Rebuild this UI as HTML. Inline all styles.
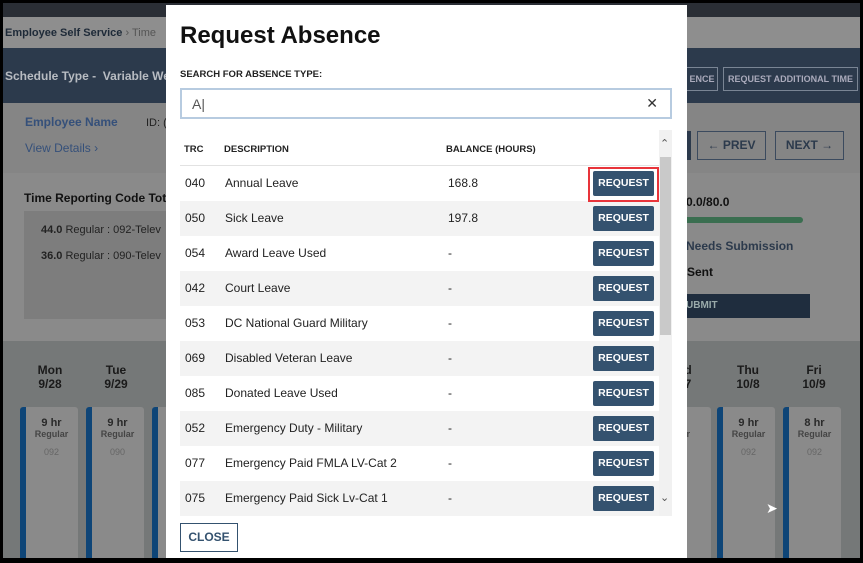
<!DOCTYPE html>
<html><head><style>
*{margin:0;padding:0;box-sizing:border-box}
body{width:863px;height:563px;overflow:hidden;position:relative;font-family:"Liberation Sans",sans-serif;background:#000}
.a{position:absolute}
.fr{left:3px;top:3px;width:857px;height:555px;background:#858585;overflow:hidden}
.card{position:absolute;top:404px;width:58px;height:160px;background:#8a8a8a;border-radius:3px;text-align:center;font-weight:bold;color:#2a2a2a}
.card:before{content:"";position:absolute;left:0;top:0;width:6px;height:100%;background:#0e4577;border-radius:3px 0 0 3px}
.card .h{font-size:11px;margin-top:10px;padding-left:5px}
.card .r{font-size:9px;color:#444;padding-left:5px}
.card .c{font-size:9px;color:#666;font-weight:normal;margin-top:8px;padding-left:5px}
.day{position:absolute;top:360px;width:58px;text-align:center;font-weight:bold;font-size:12px;color:#1a1a1a;line-height:14px}
.modal{left:166px;top:5px;width:521px;height:553px;background:#fff}
.row{position:absolute;left:14px;width:479px;height:35px;font-size:12px;color:#222}
.row span{position:absolute;top:10px}
.row.g{background:#f3f3f3}
.btn{position:absolute;left:413px;top:5px;width:61px;height:25px;background:#34526f;color:#fff;font-size:10.5px;font-weight:bold;text-align:center;line-height:25px;border-radius:2px}
</style></head><body>
<div class="a fr">
 <div class="a" style="left:0;top:0;width:857px;height:14px;background:#2a2e35"></div>
 <div class="a" style="left:0;top:14px;width:857px;height:31px;background:#8e8e8e"></div>
 <div class="a" style="left:2px;top:24px;font-size:11px;font-weight:bold;color:#1e2a38">Employee Self Service <span style="font-weight:normal;color:#555">› Time</span></div>
 <div class="a" style="left:0;top:45px;width:857px;height:55px;background:#2c3a4c"></div>
 <div class="a" style="left:2px;top:66px;font-size:12px;font-weight:bold;color:#b8bcc2">Schedule Type - &nbsp;Variable We</div>
 <div class="a" style="left:683px;top:64px;width:32px;height:24px;border:1px solid #7a8594;font-size:9px;color:#aab;font-weight:bold;line-height:22px">&nbsp;ENCE</div>
 <div class="a" style="left:720px;top:64px;width:135px;height:24px;border:1px solid #7a8594;font-size:9px;color:#aab;font-weight:bold;line-height:22px;text-align:center">REQUEST ADDITIONAL TIME</div>
 <div class="a" style="left:22px;top:112px;font-size:12px;font-weight:bold;color:#35507a">Employee Name</div>
 <div class="a" style="left:143px;top:114px;font-size:11px;color:#222">ID: (</div>
 <div class="a" style="left:22px;top:138px;font-size:12px;color:#35507a">View Details ›</div>
 <div class="a" style="left:0;top:170px;width:857px;height:168px;background:#8a8a8a"></div>
 <div class="a" style="left:21px;top:188px;font-size:12px;font-weight:bold;color:#111">Time Reporting Code Tota</div>
 <div class="a" style="left:21px;top:208px;width:150px;height:108px;background:#7d7d7d"></div>
 <div class="a" style="left:38px;top:221px;font-size:11px;color:#222"><b>44.0</b> Regular : 092-Telev</div>
 <div class="a" style="left:38px;top:247px;font-size:11px;color:#222"><b>36.0</b> Regular : 090-Telev</div>
 <div class="a" style="left:681px;top:128px;width:7px;height:29px;background:#2c3a4c"></div>
 <div class="a" style="left:694px;top:128px;width:69px;height:29px;border:1px solid #3b4a5e;font-size:12px;font-weight:bold;color:#2c3a4c;text-align:center;line-height:27px">← PREV</div>
 <div class="a" style="left:772px;top:128px;width:69px;height:29px;border:1px solid #3b4a5e;font-size:12px;font-weight:bold;color:#2c3a4c;text-align:center;line-height:27px">NEXT →</div>
 <div class="a" style="left:683px;top:192px;font-size:12px;font-weight:bold;color:#111">0.0/80.0</div>
 <div class="a" style="left:680px;top:214px;width:120px;height:6px;background:#3a6e50;border-radius:3px"></div>
 <div class="a" style="left:683px;top:236px;font-size:12px;font-weight:bold;color:#2c3a4c">Needs Submission</div>
 <div class="a" style="left:684px;top:262px;font-size:12px;font-weight:bold;color:#111">Sent</div>
 <div class="a" style="left:680px;top:291px;width:127px;height:24px;background:#1f2d3e;font-size:10px;font-weight:bold;color:#9aa;line-height:24px;padding-left:3px">UBMIT</div>
 <div class="a" style="left:0;top:338px;width:857px;height:220px;background:#757878"></div>
 <div class="day" style="left:18px">Mon<br>9/28</div><div class="day" style="left:84px">Tue<br>9/29</div>
 <div class="day" style="left:656px">d<br>7</div>
 <div class="day" style="left:716px">Thu<br>10/8</div><div class="day" style="left:782px">Fri<br>10/9</div>
 <div class="card" style="left:17px"><div class="h">9 hr</div><div class="r">Regular</div><div class="c">092</div></div>
 <div class="card" style="left:83px"><div class="h">9 hr</div><div class="r">Regular</div><div class="c">090</div></div>
 <div class="card" style="left:149px"></div>
 <div class="card" style="left:650px"><div class="h">r</div><div class="r">lar</div></div>
 <div class="card" style="left:714px"><div class="h">9 hr</div><div class="r">Regular</div><div class="c">092</div></div>
 <div class="card" style="left:780px"><div class="h">8 hr</div><div class="r">Regular</div><div class="c">092</div></div>
 <div class="a" style="left:763px;top:497px;font-size:14px;color:#fff">➤</div>
</div>
<div class="a modal">
 <div class="a" style="left:14px;top:17px;font-size:24px;font-weight:bold;color:#111">Request Absence</div>
 <div class="a" style="left:14px;top:64px;font-size:9.5px;font-weight:bold;color:#222">SEARCH FOR ABSENCE TYPE:</div>
 <div class="a" style="left:14px;top:83px;width:492px;height:31px;border:2px solid #b7cbe0;font-size:14px;color:#555;padding:6px 0 0 10px">A|<span style="position:absolute;right:12px;top:5px;color:#333">✕</span></div>
 <div class="a" style="left:14px;top:125px;width:479px;height:36px;border-bottom:1px solid #e2e2e2;font-size:9.5px;font-weight:bold;color:#222">
  <span class="a" style="left:4px;top:14px">TRC</span><span class="a" style="left:44px;top:14px">DESCRIPTION</span><span class="a" style="left:266px;top:14px">BALANCE (HOURS)</span></div>
 <div class="a" style="left:493px;top:125px;width:13px;height:386px;background:#f1f1f1"></div>
 <div class="a" style="left:494px;top:152px;width:11px;height:178px;background:#c9c9c9"></div>
 <div class="a" style="left:494px;top:132px;font-size:11px;color:#555">⌃</div>
 <div class="a" style="left:494px;top:486px;font-size:11px;color:#555">⌄</div>
 <div class="row" style="top:161px"><span style="left:5px">040</span><span style="left:45px">Annual Leave</span><span style="left:268px">168.8</span><div class="btn">REQUEST</div></div>
 <div class="row g" style="top:196px"><span style="left:5px">050</span><span style="left:45px">Sick Leave</span><span style="left:268px">197.8</span><div class="btn">REQUEST</div></div>
 <div class="row" style="top:231px"><span style="left:5px">054</span><span style="left:45px">Award Leave Used</span><span style="left:268px">-</span><div class="btn">REQUEST</div></div>
 <div class="row g" style="top:266px"><span style="left:5px">042</span><span style="left:45px">Court Leave</span><span style="left:268px">-</span><div class="btn">REQUEST</div></div>
 <div class="row" style="top:301px"><span style="left:5px">053</span><span style="left:45px">DC National Guard Military</span><span style="left:268px">-</span><div class="btn">REQUEST</div></div>
 <div class="row g" style="top:336px"><span style="left:5px">069</span><span style="left:45px">Disabled Veteran Leave</span><span style="left:268px">-</span><div class="btn">REQUEST</div></div>
 <div class="row" style="top:371px"><span style="left:5px">085</span><span style="left:45px">Donated Leave Used</span><span style="left:268px">-</span><div class="btn">REQUEST</div></div>
 <div class="row g" style="top:406px"><span style="left:5px">052</span><span style="left:45px">Emergency Duty - Military</span><span style="left:268px">-</span><div class="btn">REQUEST</div></div>
 <div class="row" style="top:441px"><span style="left:5px">077</span><span style="left:45px">Emergency Paid FMLA LV-Cat 2</span><span style="left:268px">-</span><div class="btn">REQUEST</div></div>
 <div class="row g" style="top:476px"><span style="left:5px">075</span><span style="left:45px">Emergency Paid Sick Lv-Cat 1</span><span style="left:268px">-</span><div class="btn">REQUEST</div></div>
 <div class="a" style="left:422px;top:162px;width:71px;height:35px;border:2px solid #e8343a"></div>
 <div class="a" style="left:14px;top:518px;width:58px;height:29px;border:1px solid #34526f;font-size:12px;font-weight:bold;color:#34526f;text-align:center;line-height:27px">CLOSE</div>
</div>
</body></html>
